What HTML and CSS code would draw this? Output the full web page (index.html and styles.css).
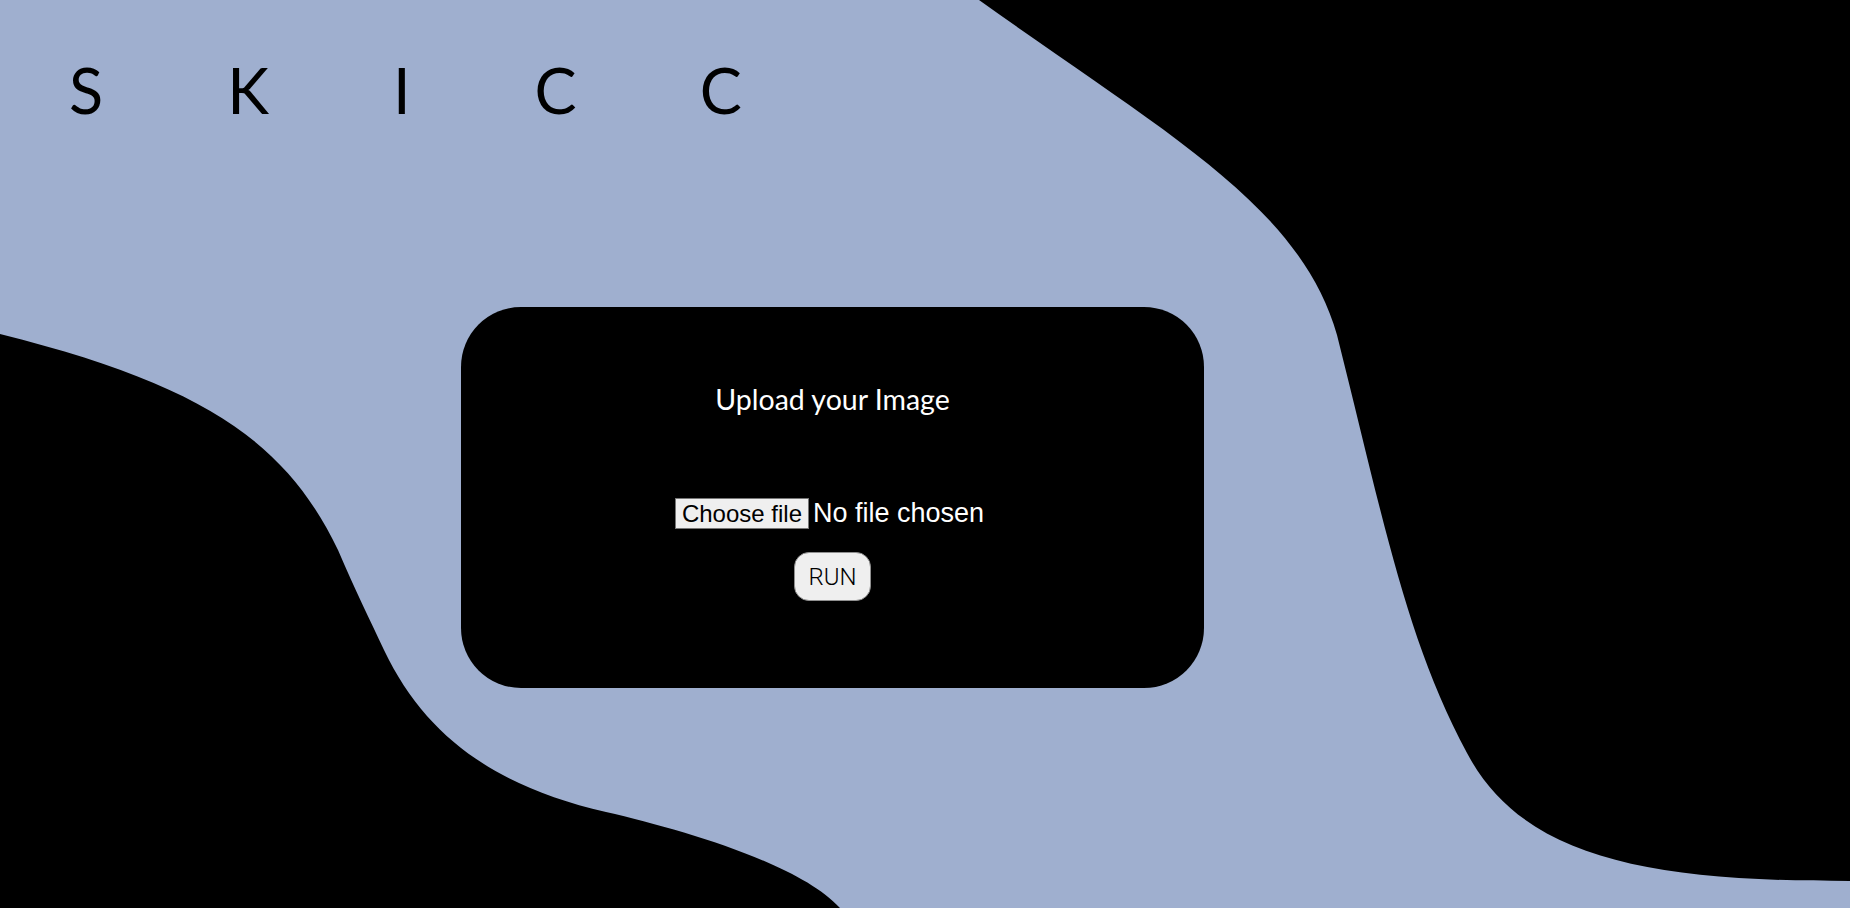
FILE: index.html
```html
<!DOCTYPE html>
<html lang="en">
<head>
<meta charset="utf-8">
<title>SKICC</title>
<link rel="stylesheet" href="styles.css">
</head>
<body>
<svg class="backdrop" viewBox="0 0 1850 908" preserveAspectRatio="none" aria-hidden="true">
  <path d="M979,0 C1165,133 1300,205 1337,335 C1384,522 1406,639 1467,753 C1523,859 1650,881 1850,881 L1850,0 Z" fill="#000"/>
  <path d="M0,334 C204,385 286,442 338,550 C355,590 370,620 384,650 C427,740 499,787 606,812 C684,830 800,864 840,908 L0,908 Z" fill="#000"/>
</svg>
<div class="page">
  <header class="logo">SKICC</header>
  <main class="card">
    <h1 class="card-title">Upload your Image</h1>
    <label class="file-picker">
      <input class="file-native" type="file">
      <span class="file-btn">Choose file</span>
      <span class="file-name">No file chosen</span>
    </label>
    <button class="run-btn" type="button">RUN</button>
  </main>
</div>
</body>
</html>
```

FILE: styles.css
```css
html, body {
  margin: 0;
  padding: 0;
}

body {
  width: 1850px;
  height: 908px;
  overflow: hidden;
  background: #9fafcf;
  position: relative;
}

.backdrop {
  position: absolute;
  left: 0;
  top: 0;
  width: 1850px;
  height: 908px;
  z-index: 0;
}

.page {
  position: relative;
  z-index: 1;
}

.logo {
  margin: 0;
  padding: 53px 0 0 69px;
  font-family: "Lato", "Liberation Sans", sans-serif;
  font-weight: 400;
  font-size: 63px;
  line-height: 74px;
  letter-spacing: 124px;
  color: #000;
}

.card {
  box-sizing: border-box;
  margin: 180px 0 0 461px;
  width: 743px;
  height: 381px;
  background: #000;
  border-radius: 60px;
  display: flex;
  flex-direction: column;
  align-items: center;
  padding-top: 76px;
}

.card-title {
  margin: 0;
  font-family: "Lato", "Liberation Sans", sans-serif;
  font-weight: 400;
  font-size: 28.5px;
  line-height: 32px;
  color: #fff;
}

.file-picker {
  display: flex;
  align-items: center;
  margin-top: 83px;
  margin-right: 6px;
  font-family: "Liberation Sans", Arial, sans-serif;
  color: #fff;
  cursor: pointer;
}

.file-native {
  display: none;
}

.file-btn {
  box-sizing: border-box;
  height: 31px;
  padding: 1px 6px;
  font-size: 24px;
  line-height: 27px;
  color: #000;
  background: #efefef;
  border: 1px solid #767676;
  margin-right: 4px;
}

.file-name {
  font-size: 27px;
  line-height: 31px;
}

.run-btn {
  box-sizing: border-box;
  margin-top: 23px;
  height: 49px;
  padding: 0 13px;
  font-family: "Roboto", "Liberation Sans", sans-serif;
  font-weight: 300;
  font-size: 24px;
  color: #000;
  background: #efefef;
  border: 1px solid #8f8f8f;
  border-radius: 15px;
}
```
